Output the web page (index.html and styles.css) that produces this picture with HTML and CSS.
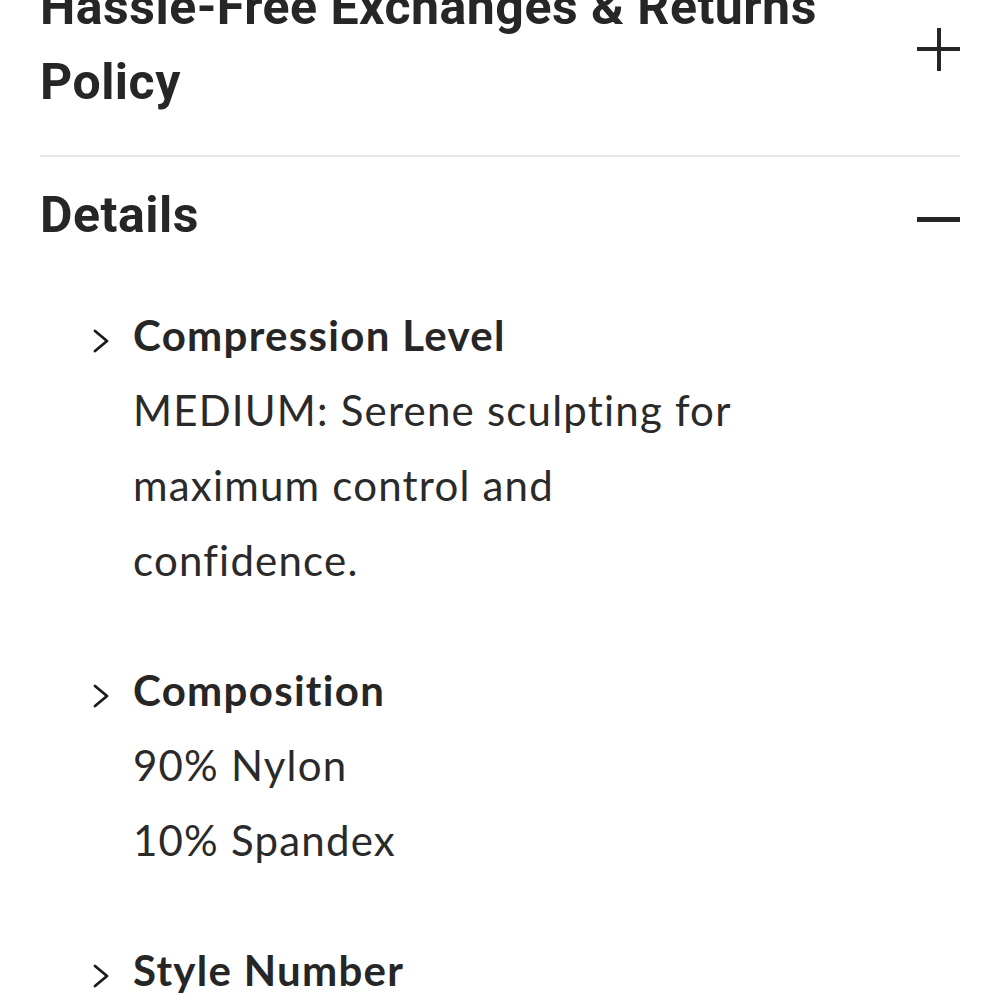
FILE: index.html
```html
<!DOCTYPE html>
<html lang="en">
<head>
    <meta charset="UTF-8">
    <meta name="viewport" content="width=device-width, initial-scale=1.0">
    <title>Product Details</title>
    <link rel="stylesheet" href="styles.css">
</head>
<body>
    <div class="accordion">

        <!-- Returns panel (collapsed) -->
        <section class="acc-item">
            <div class="acc-head">
                <h2 class="acc-title">Hassle-Free Exchanges &amp; Returns<br>Policy</h2>
                <span class="acc-icon plus"></span>
            </div>
        </section>

        <!-- Details panel (open) -->
        <section class="acc-item open">
            <div class="acc-head">
                <h2 class="acc-title">Details</h2>
                <span class="acc-icon minus"></span>
            </div>
            <ul class="detail-list">
                <li class="detail">
                    <svg class="chev" width="16" height="24" viewBox="0 0 16 24"><polyline points="2,2 14,12 2,22" /></svg>
                    <h3>Compression Level</h3>
                    <p>MEDIUM: Serene sculpting for<br>maximum control and<br>confidence.</p>
                </li>
                <li class="detail">
                    <svg class="chev" width="16" height="24" viewBox="0 0 16 24"><polyline points="2,2 14,12 2,22" /></svg>
                    <h3>Composition</h3>
                    <p>90% Nylon<br>10% Spandex</p>
                </li>
                <li class="detail">
                    <svg class="chev" width="16" height="24" viewBox="0 0 16 24"><polyline points="2,2 14,12 2,22" /></svg>
                    <h3>Style Number</h3>
                    <p>SF2014</p>
                </li>
            </ul>
        </section>

    </div>
</body>
</html>
```

FILE: styles.css
```css
/* General */
body { margin: 0; background: #fff; color: #262626; font-family: "Lato", "Open Sans", sans-serif; overflow: hidden; }
.accordion { padding: 0 40px; margin-top: -30px; }

/* Panel headers */
.acc-item { border-bottom: 2px solid #e6e6e6; }
.acc-item.open { border-bottom: none; }
.acc-head { display: flex; justify-content: space-between; align-items: center; }
.acc-item:first-child .acc-head { padding-bottom: 35px; }
.acc-item.open .acc-head { padding-top: 21px; }
.acc-title {
    margin: 0;
    font-family: "Roboto", "Liberation Sans", sans-serif;
    font-weight: 700;
    font-size: 50px;
    line-height: 75px;
    letter-spacing: 0.5px;
    white-space: nowrap;
}

/* Plus / minus icons */
.acc-icon { position: relative; width: 43px; height: 43px; flex: none; }
.acc-icon::before, .acc-icon::after { content: ""; position: absolute; background: #262626; }
.acc-icon::before { left: 0; right: 0; top: 19px; height: 4px; }
.plus { margin-top: 8px; }
.plus::after { top: 0; bottom: 0; left: 20px; width: 4px; }
.minus { margin-top: 8px; }
.minus::before { height: 5px; }

/* Detail list */
.detail-list { list-style: none; margin: 0; padding: 45px 0 0 53px; }
.detail { display: grid; grid-template-columns: 40px 1fr; margin-bottom: 55px; }
.chev { grid-column: 1; align-self: center; margin-top: 10px; }
.chev polyline { fill: none; stroke: #1a1a1a; stroke-width: 2.8; stroke-linecap: round; stroke-linejoin: round; }
.detail h3 { grid-column: 2; margin: 0; font-size: 42px; font-weight: 700; line-height: 75px; letter-spacing: 1.3px; }
.detail p { grid-column: 2; margin: 0; font-size: 42px; font-weight: 400; line-height: 75px; letter-spacing: 1.2px; color: #2a2a2a; }
```
